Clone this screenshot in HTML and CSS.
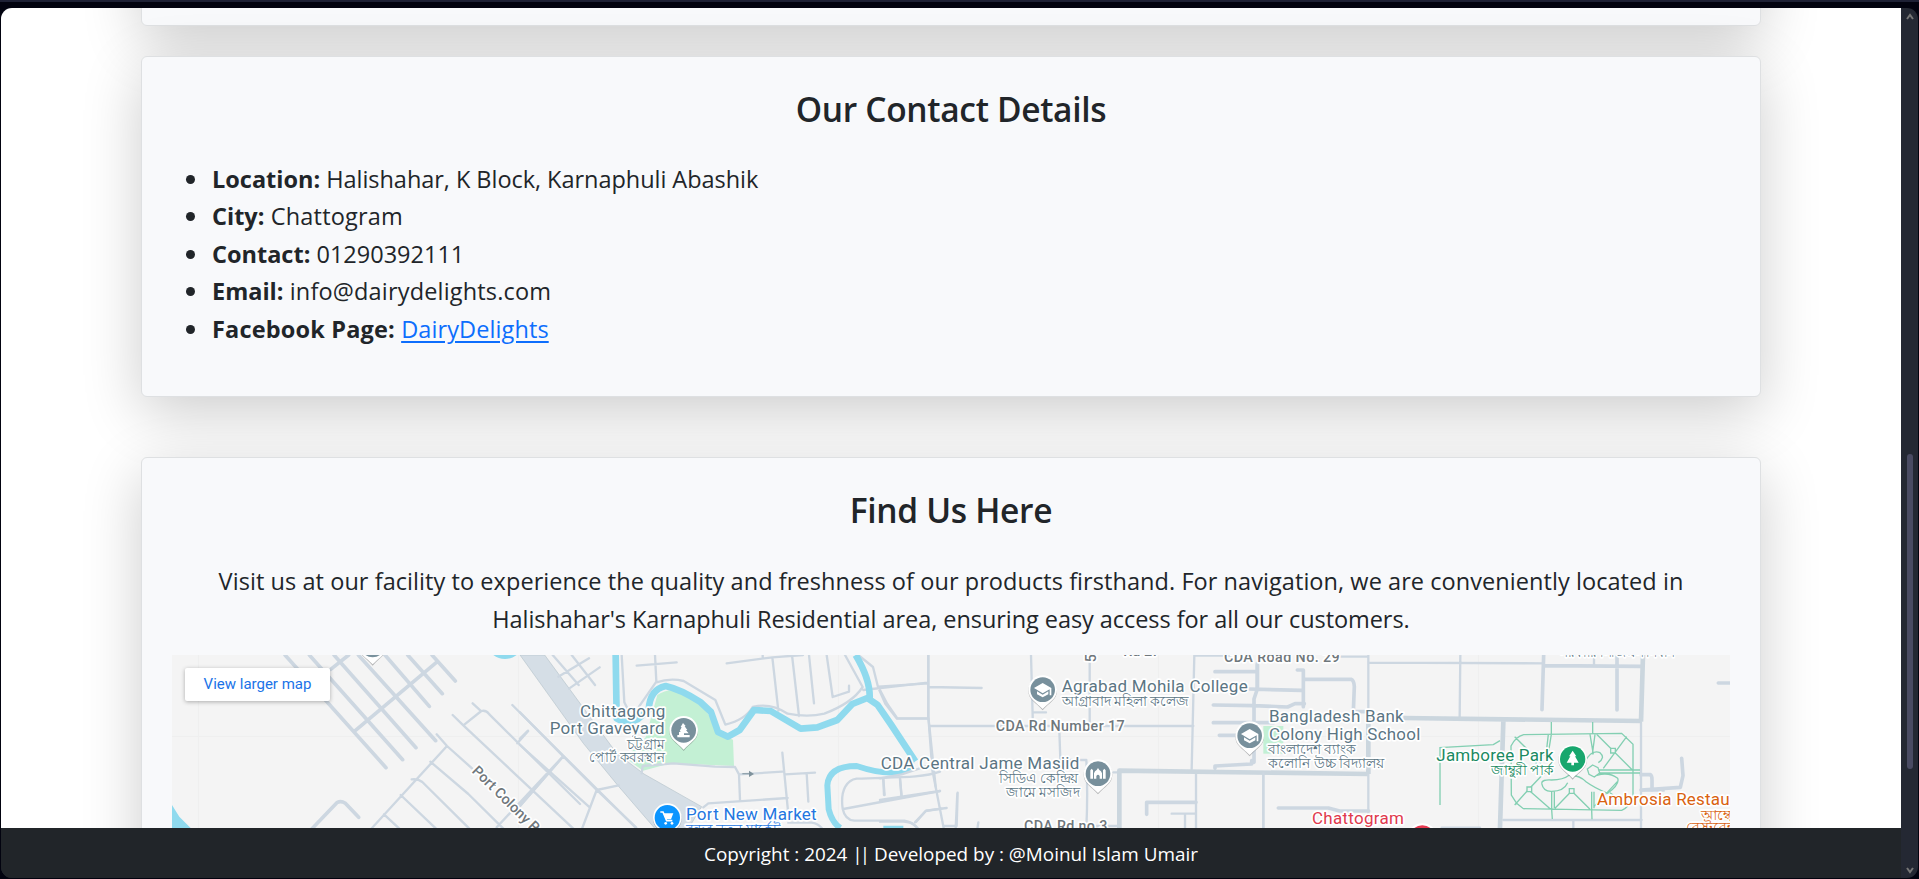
FILE: index.html
```html
<!DOCTYPE html>
<html lang="en">
<head>
<meta charset="utf-8">
<title>Dairy Delights - Contact</title>
<link rel="stylesheet" href="styles.css">
</head>
<body>
<div class="frame">
  <div class="window">
    <div class="view">
      <main class="page">
        <section class="card card-previous"></section>
        <section class="card card-contact">
          <h2 class="title">Our Contact Details</h2>
          <ul class="details">
            <li class="l1"><strong>Location:</strong> Halishahar, K Block, Karnaphuli Abashik</li>
            <li class="l2"><strong>City:</strong> Chattogram</li>
            <li class="l3"><strong>Contact:</strong> 01290392111</li>
            <li class="l4"><strong>Email:</strong> info@dairydelights.com</li>
            <li class="l5"><strong>Facebook Page:</strong> <a href="#">DairyDelights</a></li>
          </ul>
        </section>
        <section class="card card-map">
          <h2 class="title">Find Us Here</h2>
          <p class="intro"><span class="p1">Visit us at our facility to experience the quality and freshness of our products firsthand. For navigation, we are conveniently located in</span><br><span class="p2">Halishahar's Karnaphuli Residential area, ensuring easy access for all our customers.</span></p>
          <div class="map">
            <svg class="map-canvas" viewBox="0 0 4674 519" width="1558" height="173">
              <defs>
                <g id="pin"><path class="pin-shadow" d="M-43 3a43 43 0 1 1 86 0c0 27-22 34-43 59c-21-25-43-32-43-59z"/><path fill="#fff" d="M-43 0a43 43 0 1 1 86 0c0 27-22 36-43 58c-21-22-43-31-43-58z"/></g>
                <g id="school"><use href="#pin"/><circle r="37" fill="#78909c"/><path fill="#fff" d="M-26-5L0-20l26 15v22h-5v-18L0 11z"/><path fill="#fff" d="M-17 5v9L0 23l17-9V5L0 15z"/></g>
              </defs>
              <g transform="translate(-36 -45)">
                <!-- tile grid -->
                <path class="grid" d="M36 289H4710M115 45v519M1075 45v519M2035 45v519M2995 45v519M3955 45v519"/>
                <!-- western blocks -->
                <path class="water" d="M36 495l22 35 34 34H36zM1000 45c20 16 50 16 70 0z"/>
                <path class="road wide" d="M375 45L678 383M448 45L728 359M522 45L768 323M595 45L827 302M675 45L808 199M743 45L847 161M816 45L886 123M583 274L832 65M512 88L566 45M456 566l76-79q12-5 24 3l40 42"/>
                <path class="road" d="M830 283l31 35L936 385M634 566L861 318M755 418q18-3 32 8L928 566M811 365L925 462 1030 566M722 465L828 566M672 523L718 566M878 225l32 31L1240 566M910 256l54-43q14-4 24 10L1260 492M938 190l26 24M1057 195L1430 566M1072 310l32-36M1210 348L1010 562M1080 498L1210 348"/>
                <g transform="translate(1080 0)">
                  <!-- main avenue and graveyard -->
                  <path fill="#c3f0d4" d="M412 165q30-20 60-12q65 32 92 68l30 60 45 18 3 79-190-8-83 22-52-38 60-62z"/>
                  <path fill="#d5dee6" stroke="#b7c4cb" stroke-width="2" d="M0 45h74L290 340 372 402 545 500l-40 66H405L294 437 190 310z"/>
                  <path class="road" d="M98 45l78 90M155 45l70 90M115 110l92-55M147 146l92-64M305 45l8 142 15 30M0 217l130 132L230 450 348 562M0 315L210 503M130 349L0 498M24 272L0 296M230 450l-43 114M230 450l66-14M350 77l120-10M405 45l4 80-52 75M409 127q42-14 82-4l95 57 30 74q60-15 82-53 53-14 105 20 60 12 110 0 84-32 115-80L975 45M620 70l137-18 92-7M728 45v8M757 52l18 160M816 45l21 183M867 45l15 145M920 45l18 126 49-16v-18M1030 150l193-22M1015 45l44 36 15 60 22 50 35 45h95M1225 45v185l22 210M365 400l3-22 92-8 125 10 60 1 12 22 3 77M657 403l130-8M787 338l18 185M795 403l90-5M860 400l5 85M550 502l15-12 238-16M805 548h70q20 3 30 16M1260 395c-55 20-140 16-250 21-28 4-50 32-42 90 6 30 25 35 35 36h150c20 3 30 10 40 22M970 507l290-54M1090 420l4 45M1140 418l5 50M1188 546l30-34 62-8"/>
                  <path class="river" d="M287 45l3 190q32 19 64 2l32-27q3-62 51-72 45 10 104 48l32 30 21 60 30 14 35-20 43-60 50 3 90 53 50-4 60-22 45-48 45-18 30 20 40 58 74 112M1007 45q45 75 42 132"/>
                  <path class="river river-thin" d="M1170 352q12 28-15 38-50 20-145-12-84 0-88 58l4 72q10 40 35 56M1090 566h60"/>
                  <path fill="#7f929c" d="M667 400h20v-8l15 10-15 9v-8h-20z"/>
                </g>
                <g transform="translate(2160 0)">
                  <!-- CDA area -->
                  <path class="road" d="M145 45v185l12 160 34 174M145 141l160 3M-5 140l150-10M0 150l22 42 30 43h92M150 258h790M453 45l6 220M460 217h38M629 45v200M538 270l3 90h78q5 100 0 205M943 45l-8 343M943 47h110M0 415l65-12 115-38M0 480l180-27M10 415l2 50M60 413l4 53M0 545h70q25 1 38 15M105 547l32-34 48-7M190 558h40l3-100M232 460l-5 105M295 547l-3 20M619 558h92M700 397h20M948 397v167M1150 400v164M875 521h70M915 521v43"/>
                  <path class="road wide" d="M1005 95h127M1132 70v77l-10 30v190M1000 195l120 2 103 4 22-10h28M1000 248h180M1018 286h65M1105 147l160 4M800 523v-36h148M1005 385v-7l110-6v-10M1195 504h150l34 9h87"/>
                  <path class="road avenue" d="M718 564V392L1465 402"/>
                  <path fill="#c3f0d4" d="M1150 258h60v83h-60z"/>
                </g>
                <g transform="translate(3240 0)">
                  <!-- park district -->
                  <path class="road" d="M300 50h85M385 45v520M385 68l525 2M661 45l-2 185M1062 45v30M70 400v164M790 540h415M1000 540v24M605 563h115M1203 248v316M1203 452h68"/>
                  <path class="road wide" d="M52 75v70M172 90h18v110M190 118h143q9 3 10 22l-3 75h45M911 45l-5 164M915 77l290 2M1131 50v160M1203 404h28q5 3 5 15v30"/>
                  <path class="road avenue" d="M385 402V215M490 234l715 9M1209 45l-6 200M790 245L780 564"/>
                  <path class="park-path" d="M600 495V323l160-9 20-12M934 246v36M1058 246v35M830 490l-16-25-1-147q14-28 38-34l294-4 34 33v155q-10 33-34 43l-295-5zM824 290l80 80M824 495l43-48 65-68M866 450l66 58M934 283l-12 75M925 283l-8 70M1050 283l10 60M1065 283l-8 60M1070 283l110 110M1160 290l-70 95M1070 390h130M1070 399h130M935 455v54l2 28M943 455v50M1055 455v55l1 28M1062 455v50M945 505l50-52 55 55M1062 500l70-75M1110 458l48 35M905 430q0-12 30-10 35 0 52-14 30-2 52 20 25 18 64 34 37-27 30-45-27-20-62-9M905 430q5 25 30 24 37-1 48-26M1035 365q20-38 45-27 17 15-5 30M890 375q-10-38 30-30"/>
                  <path fill="#f4f4f4" stroke="#83cfb2" stroke-width="4" d="M1112 325h14v14h-14zM861 441h14v14h-14zM988 446h14v14h-14zM1058 375l16 8 5 16-16 12-16-8-5-16z"/>
                  <path class="road wide" d="M1435 129h40M1325 355l4 52-8 35-118 8"/>
                </g>
                <!-- road names -->
                <text class="road-name" transform="translate(934 395) rotate(44.5)">Port Colony Rd</text>
                <text class="road-name" x="2507" y="273" textLength="387">CDA Rd Number 17</text>
                <text class="road-name" x="2592" y="573" textLength="250">CDA Rd no 3</text>
                <text class="road-name" x="2890" y="48">Rd 27</text>
                <text class="road-name" transform="translate(2807 67) rotate(-90)">5</text>
                <text class="road-name" x="3192" y="66" textLength="347">CDA Road No. 29</text>
                <!-- places -->
                <text class="place" x="1260" y="230" textLength="256">Chittagong</text>
                <text class="place" x="1169" y="282" textLength="345">Port Graveyard</text>
                <text class="place bn" x="1400" y="326" textLength="114" lengthAdjust="spacingAndGlyphs">চট্টগ্রাম</text>
                <text class="place bn" x="1288" y="366" textLength="226" lengthAdjust="spacingAndGlyphs">পোর্ট কবরস্থান</text>
                <text class="place" x="2705" y="155" textLength="558">Agrabad Mohila College</text>
                <text class="place bn" x="2705" y="197" textLength="383" lengthAdjust="spacingAndGlyphs">আগ্রাবাদ মহিলা কলেজ</text>
                <text class="place" x="2162" y="386" textLength="596">CDA Central Jame Masjid</text>
                <text class="place bn" x="2518" y="428" textLength="237" lengthAdjust="spacingAndGlyphs">সিডিএ কেন্দ্রিয়</text>
                <text class="place bn" x="2538" y="470" textLength="220" lengthAdjust="spacingAndGlyphs">জামে মসজিদ</text>
                <text class="place" x="3327" y="247" textLength="404">Bangladesh Bank</text>
                <text class="place" x="3327" y="300" textLength="454">Colony High School</text>
                <text class="place bn" x="3325" y="341" textLength="263" lengthAdjust="spacingAndGlyphs">বাংলাদেশ ব্যাংক</text>
                <text class="place bn" x="3325" y="384" textLength="348" lengthAdjust="spacingAndGlyphs">কলোনি উচ্চ বিদ্যালয়</text>
                <text class="place green" x="3829" y="363" textLength="352">Jamboree Park</text>
                <text class="place green bn" x="3994" y="405" textLength="187" lengthAdjust="spacingAndGlyphs">জাম্বুরী পার্ক</text>
                <text class="place orange" x="4311" y="496" textLength="398">Ambrosia Restau</text>
                <text class="place orange bn" x="4622" y="539">আম্বে</text>
                <text class="place orange bn" x="4578" y="577">রেস্টুরেন্ট</text>
                <text class="place red" x="3456" y="552" textLength="276">Chattogram</text>
                <text class="place blue" x="1578" y="540" textLength="392">Port New Market</text>
                <text class="place blue bn" x="1578" y="582" textLength="285" lengthAdjust="spacingAndGlyphs">বন্দর নতুন মার্কেট</text>
                <text class="place bn" x="4200" y="51" textLength="345" lengthAdjust="spacingAndGlyphs">সরকারি সিজিএস নিবাস</text>
                <!-- pins -->
                <g transform="translate(638 15)"><use href="#pin"/><circle r="37" fill="#78909c"/></g>
                <g transform="translate(1571 271)"><use href="#pin"/><circle r="37" fill="#78909c"/><path fill="#fff" d="M-2-22l8 9-3 1 8 11-4 1 8 9h-14v5h17v7h-37v-7h5v-9h6l-4-3 6-11-3-1z"/></g>
                <g transform="translate(1522 533)"><use href="#pin"/><circle r="38" fill="#0b95ff"/><path fill="none" stroke="#fff" stroke-width="5" d="M-21-17h8l11 26h17"/><path fill="#fff" d="M-12-13h30L11 5H-5z"/><circle cx="-5" cy="17" r="4" fill="#fff"/><circle cx="14" cy="17" r="4" fill="#fff"/></g>
                <use href="#school" x="2648" y="149"/>
                <use href="#school" x="3269" y="287"/>
                <g transform="translate(2814 401)"><use href="#pin"/><circle r="37" fill="#78909c"/><path fill="#fff" d="M-23-10l4-5 4 5v25h-8zM15-10l4-5 4 5v25h-8zM-12 15V-1q2-7 8-10l4-6 4 6q6 3 8 10v16H5V7Q0-1-5 7v8z"/></g>
                <g transform="translate(4238 357)"><use href="#pin"/><circle r="38" fill="#18a76e"/><path fill="#fff" d="M0-25l11 17H7l11 19H4v8h-8v-8h-14L-7-8h-4z"/></g>
                <circle cx="3787" cy="596" r="46" fill="#fff"/><circle cx="3787" cy="596" r="40" fill="#e63950"/>
              </g>
            </svg>
            <a class="map-link" href="#">View larger map</a>
          </div>
        </section>
      </main>
      <footer class="footer"><span>Copyright : 2024 <span class="bars">||</span> Developed by : @Moinul Islam Umair</span></footer>
    </div>
    <aside class="scrollbar">
      <svg width="8" height="8" viewBox="0 0 8 8"><path d="M1 6l3-4 3 4"/></svg>
      <div class="thumb"></div>
      <svg width="8" height="8" viewBox="0 0 8 8"><path d="M1 2l3 4 3-4"/></svg>
    </aside>
  </div>
</div>
</body>
</html>
```
FILE: styles.css
```css
* { box-sizing: border-box; }
body { margin: 0; background: #02030f; overflow: hidden; font-family: "Open Sans", "Noto Sans", sans-serif; color: #212529; }
.frame { height: 879px; padding: 6px 1px 1px; border-top: 2px solid #1e2135; }
.window { display: flex; height: 870px; overflow: hidden; border-radius: 11px; background: #242833; }
.view { display: flex; flex-direction: column; width: 1900px; height: 870px; }
.page { height: 820px; overflow: hidden; background: #fff; padding: 0 140px; display: flex; flex-direction: column; }
.card { flex: none; width: 1620px; padding: 0 30px; background: #f8f9fb; border: 1px solid #dee0e2; border-radius: 6px; box-shadow: 0 16px 60px rgba(0, 0, 0, .2); }
.card-previous { height: 300px; margin-top: -282px; }
.card-contact { height: 341px; margin-top: 30px; }
.card-map { height: 700px; margin-top: 60px; }
.title { margin: 29px 0 28.5px; font-size: 33.5px; line-height: 46px; font-weight: 600; letter-spacing: -.32px; text-align: center; }
.details { margin: 0; padding-left: 40px; font-size: 23.5px; line-height: 37.5px; list-style: none; }
.details li { position: relative; }
.details li::before { content: ""; position: absolute; left: -26px; top: 14px; width: 9px; height: 9px; border-radius: 50%; background: #212529; }
.details strong { font-weight: 700; letter-spacing: 0; }
.details a { color: #0d6efd; text-underline-offset: 3px; text-decoration-thickness: 2px; }
.l1 { letter-spacing: -.04px; }
.l2 { letter-spacing: .2px; }
.l4 { letter-spacing: .17px; }
.details .l5 strong { letter-spacing: .17px; }
.l5 { letter-spacing: .1px; }
.intro { margin: 0 0 17.5px; font-size: 23.5px; line-height: 38px; text-align: center; white-space: nowrap; }
.p1 { letter-spacing: .063px; }
.p2 { letter-spacing: -.06px; }
.map { position: relative; width: 1558px; height: 450px; background: #f4f4f4; overflow: hidden; }
.map-canvas { display: block; }
.map-link { position: absolute; left: 13px; top: 13px; width: 145px; height: 33px; border-radius: 2px; background: #fff; box-shadow: 0 1px 4px rgba(0, 0, 0, .3); color: #1a73e8; font: 15px/32px Roboto, sans-serif; text-align: center; text-decoration: none; }
.footer { height: 50px; padding-top: 2px; background: #212529; color: #fff; display: flex; align-items: center; justify-content: center; font-size: 18.9px; line-height: 30px; white-space: nowrap; }
.bars { letter-spacing: -3px; margin-right: 2px; }
.scrollbar { display: flex; flex-direction: column; align-items: center; width: 17px; height: 870px; padding: 5px 0 4px; }
.scrollbar svg { flex: none; fill: none; stroke: #777; stroke-width: 2; }
.thumb { width: 6px; height: 315px; margin: 433px 0 auto; border-radius: 3px; background: #4a4b63; }

.grid { fill: none; stroke: #eeefef; stroke-width: 3; }
.water { fill: #8fdaee; }
.road { fill: none; stroke: #cdd7e1; stroke-width: 7; stroke-linecap: round; stroke-linejoin: round; }
.road.wide { stroke-width: 11; }
.road.avenue { stroke: #cbd6de; stroke-width: 14; stroke-linecap: butt; }
.river { fill: none; stroke: #8fdaee; stroke-width: 20; stroke-linejoin: round; }
.river-thin { stroke-width: 18; }
.park-path { fill: none; stroke: #83cfb2; stroke-width: 4; }
.pin-shadow { fill: rgba(60, 64, 67, .35); }
.road-name { font: 500 43px Roboto, sans-serif; fill: #6f777c; paint-order: stroke; stroke: #fff; stroke-width: 10; stroke-linejoin: round; }
.place { font: 400 51px Roboto, sans-serif; fill: #5b7583; paint-order: stroke; stroke: #fff; stroke-width: 10; stroke-linejoin: round; }
.place.bn { font-size: 42px; }
.place.green { fill: #1b8a62; }
.place.orange { fill: #d9620f; }
.place.red { fill: #e0394d; }
.place.blue { fill: #2376e0; }
```
